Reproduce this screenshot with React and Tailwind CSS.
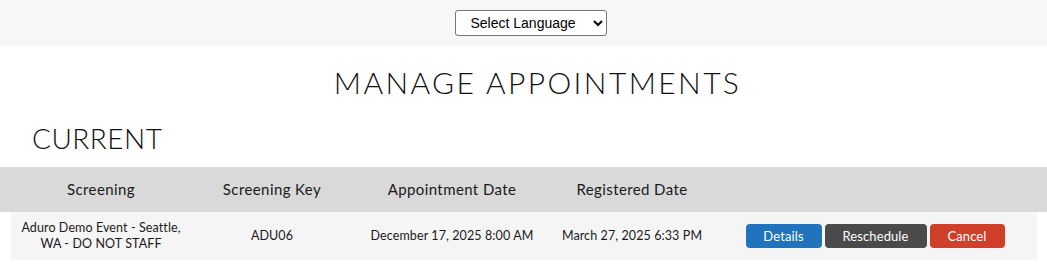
const cols = ["w-[180px]", "w-[162px]", "w-[198px]", "w-[162px]", "flex-1"];

const headers = ["Screening", "Screening Key", "Appointment Date", "Registered Date", ""];

const appointments = [
  {
    id: 1,
    screening: "Aduro Demo Event - Seattle, WA - DO NOT STAFF",
    key: "ADU06",
    appointment: "December 17, 2025 8:00 AM",
    registered: "March 27, 2025 6:33 PM",
  },
];

export default function App() {
  return (
    <div className="min-h-[270px] bg-white text-[#1a1a1a] font-['Lato','Liberation_Sans',sans-serif]">
      <div className="h-[46px] bg-[#f7f7f7] flex items-center justify-center pl-[14px]">
        <select className="w-[152px] h-[26px] bg-white border border-[#767676] rounded-[3px] pl-[11px] pr-[6px] text-[14px] text-black font-['Liberation_Sans',sans-serif]">
          <option>Select Language</option>
        </select>
      </div>

      <h1 className="mt-[18px] pl-[28px] text-center text-[30px] leading-[36px] font-light tracking-[2.4px] text-[#111]">
        MANAGE APPOINTMENTS
      </h1>

      <h2 className="mt-[22px] ml-[32px] text-[28px] leading-[32px] font-light tracking-[0.5px] text-[#111]">
        CURRENT
      </h2>

      <div className="mt-[13px]">
        <div className="h-[45px] bg-[#d9d9d9] flex items-center pl-[11px] pr-[10px] text-[15px] tracking-[0.4px]">
          {headers.map((h, i) => (
            <div key={i} className={`${cols[i]} text-center`}>
              {h}
            </div>
          ))}
        </div>

        {appointments.map((a) => (
          <div
            key={a.id}
            className="ml-[11px] mr-[10px] h-[48px] bg-[#f5f5f5] flex items-center text-[12.5px] leading-[16px] tracking-[0.1px]"
          >
            <div className={`${cols[0]} text-center px-1`}>{a.screening}</div>
            <div className={`${cols[1]} text-center`}>{a.key}</div>
            <div className={`${cols[2]} text-center`}>{a.appointment}</div>
            <div className={`${cols[3]} text-center`}>{a.registered}</div>
            <div className={`${cols[4]} flex justify-center gap-[3px] text-[13px] text-white`}>
              <button className="w-[76px] h-[24px] rounded-[4px] bg-[#2173bd]">Details</button>
              <button className="w-[102px] h-[24px] rounded-[4px] bg-[#4a4a4a]">Reschedule</button>
              <button className="w-[75px] h-[24px] rounded-[4px] bg-[#cf3f2a]">Cancel</button>
            </div>
          </div>
        ))}
      </div>
    </div>
  );
}
